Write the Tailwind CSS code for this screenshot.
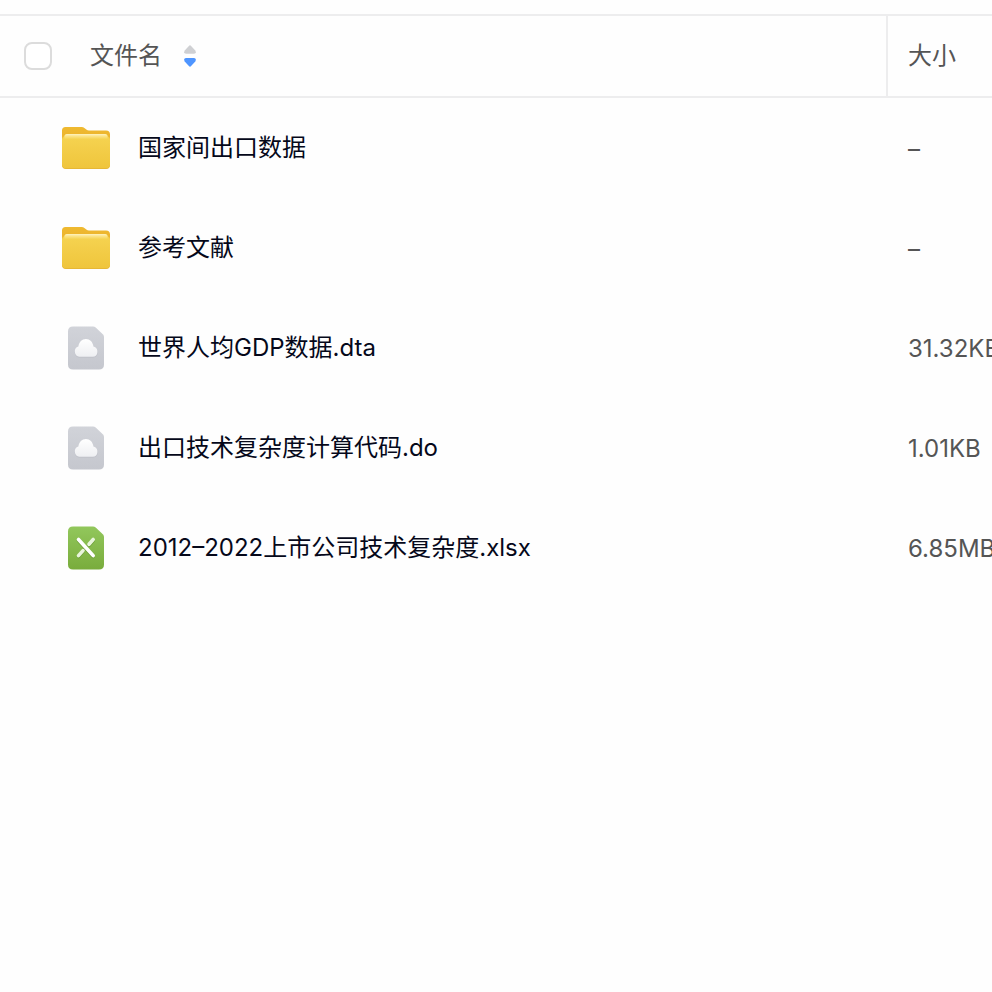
<!DOCTYPE html>
<html lang="zh-CN">
<head>
<meta charset="utf-8">
<meta name="viewport" content="width=device-width, initial-scale=1">
<title>文件列表</title>
<script src="https://cdn.jsdelivr.net/npm/@tailwindcss/browser@4"></script>
</head>
<body class="min-h-screen overflow-x-hidden bg-[#fefefe] font-[Inter,'Noto_Sans_CJK_SC',sans-serif] text-2xl text-[#05081a]">
<svg class="absolute size-0" aria-hidden="true">
  <defs>
    <linearGradient id="folderBack" x1="0" y1="0" x2="0" y2="1"><stop offset="0" stop-color="#efb930"/><stop offset="1" stop-color="#e4a925"/></linearGradient>
    <linearGradient id="folderFront" x1="0" y1="0" x2="0" y2="1"><stop offset="0" stop-color="#f6d452"/><stop offset="1" stop-color="#efc53c"/></linearGradient>
    <linearGradient id="paper" x1="0" y1="0" x2="0" y2="1"><stop offset="0" stop-color="#fff3c0"/><stop offset=".4" stop-color="#fbe48c"/><stop offset="1" stop-color="#f6d452"/></linearGradient>
    <linearGradient id="grayDoc" x1="0" y1="0" x2="0" y2="1"><stop offset="0" stop-color="#d1d3d9"/><stop offset="1" stop-color="#c5c7ce"/></linearGradient>
    <linearGradient id="greenDoc" x1="0" y1="0" x2="0" y2="1"><stop offset="0" stop-color="#92c75c"/><stop offset="1" stop-color="#79ac3c"/></linearGradient>
    <linearGradient id="cloudFill" x1="0" y1="0" x2="0" y2="1"><stop offset="0" stop-color="#fff"/><stop offset="1" stop-color="#eeeff2"/></linearGradient>
    <symbol id="folder" viewBox="0 0 48 48">
      <path d="M0 6.500Q0 3 3.500 3H19.500Q21.300 3 22.700 4.200L24.300 5.600Q25.500 6.600 27 6.600H44Q48 6.600 48 10.500V40H0Z" fill="url(#folderBack)"/>
      <path d="M0 15Q0 13 1.500 12V41Q0 40 0 38ZM48 15Q48 13 46.500 12V41Q48 40 48 38Z" fill="#f0c440"/>
      <path d="M0 15.500Q0 13.500 1.500 13L2.500 11.500Q3 10 5 10H43Q45 10 45.500 11.500L46.500 13Q48 13.500 48 15.500V41Q48 45 44 45H4Q0 45 0 41Z" fill="#e4b232"/>
      <path d="M0 15.500Q0 13.500 1.500 13L2.500 11.500Q3 10 5 10H43Q45 10 45.500 11.500L46.500 13Q48 13.500 48 15.500V40.200Q48 44.200 44 44.200H4Q0 44.200 0 40.200Z" fill="url(#folderFront)"/>
      <path d="M2.500 15V12.500Q2.500 10 5 10H43Q45.500 10 45.500 12.500V15Z" fill="url(#paper)"/>
    </symbol>
    <symbol id="cloud" viewBox="0 0 48 48">
      <path d="M6 7.500Q6 2.500 11 2.500H31Q32.500 2.500 33.700 3.600L40.800 10.200Q42 11.400 42 13V40.500Q42 45.500 37 45.500H11Q6 45.500 6 40.500Z" fill="url(#grayDoc)"/>
      <path d="M17 33.500A5.400 5.400 0 0 1 16.200 23.200C17.400 18.400 20 15.800 23.800 15.800C27.800 15.800 30.600 18.700 31.400 22.800A5.400 5.400 0 0 1 31 33.500Z" fill="#bcbec6"/>
      <path d="M17.200 32.800A5.300 5.300 0 0 1 16.300 22.600C17 18 20 15 23.900 15C27.900 15 30.800 18 31.500 22.400A5.300 5.300 0 0 1 30.800 32.800Z" fill="url(#cloudFill)"/>
    </symbol>
    <symbol id="sheet" viewBox="0 0 48 48">
      <path d="M6 7.500Q6 2.500 11 2.500H31Q32.500 2.500 33.700 3.600L40.800 10.200Q42 11.400 42 13V40.500Q42 45.500 37 45.500H11Q6 45.500 6 40.500Z" fill="url(#greenDoc)"/>
      <g fill="none" stroke-linecap="round" stroke-width="3.600">
        <path d="M31.200 15.800L27 20.600M21 26.600L16.500 31.800M16.500 15.800L31.200 31.800" stroke="#689b32" transform="translate(0 .7)"/>
        <path d="M31.200 15.500L27 20.300M21 26.600L16.500 31.600" stroke="#e9f5dc"/>
        <path d="M16.500 15.500L31.200 31.600" stroke="#fff"/>
      </g>
    </symbol>
  </defs>
</svg>
<main class="pt-3.5">
  <table class="w-full table-fixed border-separate border-spacing-0 text-left">
    <colgroup><col><col class="w-[106px]"></colgroup>
    <thead class="text-[#555]">
      <tr class="h-[84px]">
        <th scope="col" class="border-y-2 border-[#ededee] p-0 pl-6 font-normal">
          <div class="flex items-center">
            <input type="checkbox" aria-label="全选" class="size-7 appearance-none rounded-lg border-2 border-[#dcdcdc] bg-white checked:bg-[#4e95ff]">
            <button type="button" class="ml-[38px] flex items-center gap-[22px]">
              <span>文件名</span>
              <svg class="h-6 w-3" viewBox="0 0 12 24" aria-hidden="true">
                <path d="M4.900 1.900Q6 .800 7.100 1.900L11.300 6.400Q12.800 9.800 10 9.800H2Q-.800 9.800 .700 6.400Z" fill="#cfd0d3"/>
                <path d="M4.900 22.100Q6 23.200 7.100 22.100L11.300 17.600Q12.800 14 10 14H2Q-.800 14 .700 17.600Z" fill="#4e95ff"/>
              </svg>
            </button>
          </div>
        </th>
        <th scope="col" class="border-y-2 border-l-2 border-[#ededee] p-0 pl-5 font-normal">大小</th>
      </tr>
    </thead>
    <tbody class="whitespace-nowrap">
      <tr class="h-[100px]">
        <td class="p-0 pl-[62px]"><a href="#" class="flex items-center gap-7"><svg class="size-12" aria-hidden="true"><use href="#folder"/></svg><span>国家间出口数据</span></a></td>
        <td class="p-0 pt-0.5 pl-[22px] text-[#555]">–</td>
      </tr>
      <tr class="h-[100px]">
        <td class="p-0 pl-[62px]"><a href="#" class="flex items-center gap-7"><svg class="size-12" aria-hidden="true"><use href="#folder"/></svg><span>参考文献</span></a></td>
        <td class="p-0 pt-0.5 pl-[22px] text-[#555]">–</td>
      </tr>
      <tr class="h-[100px]">
        <td class="p-0 pl-[62px]"><a href="#" class="flex items-center gap-7"><svg class="size-12" aria-hidden="true"><use href="#cloud"/></svg><span>世界人均GDP数据.dta</span></a></td>
        <td class="p-0 pt-0.5 pl-[22px] text-[#555]">31.32KB</td>
      </tr>
      <tr class="h-[100px]">
        <td class="p-0 pl-[62px]"><a href="#" class="flex items-center gap-7"><svg class="size-12" aria-hidden="true"><use href="#cloud"/></svg><span>出口技术复杂度计算代码.do</span></a></td>
        <td class="p-0 pt-0.5 pl-[22px] text-[#555]">1.01KB</td>
      </tr>
      <tr class="h-[100px]">
        <td class="p-0 pl-[62px]"><a href="#" class="flex items-center gap-7"><svg class="size-12" aria-hidden="true"><use href="#sheet"/></svg><span>2012–2022上市公司技术复杂度.xlsx</span></a></td>
        <td class="p-0 pt-0.5 pl-[22px] text-[#555]">6.85MB</td>
      </tr>
    </tbody>
  </table>
</main>
</body>
</html>
